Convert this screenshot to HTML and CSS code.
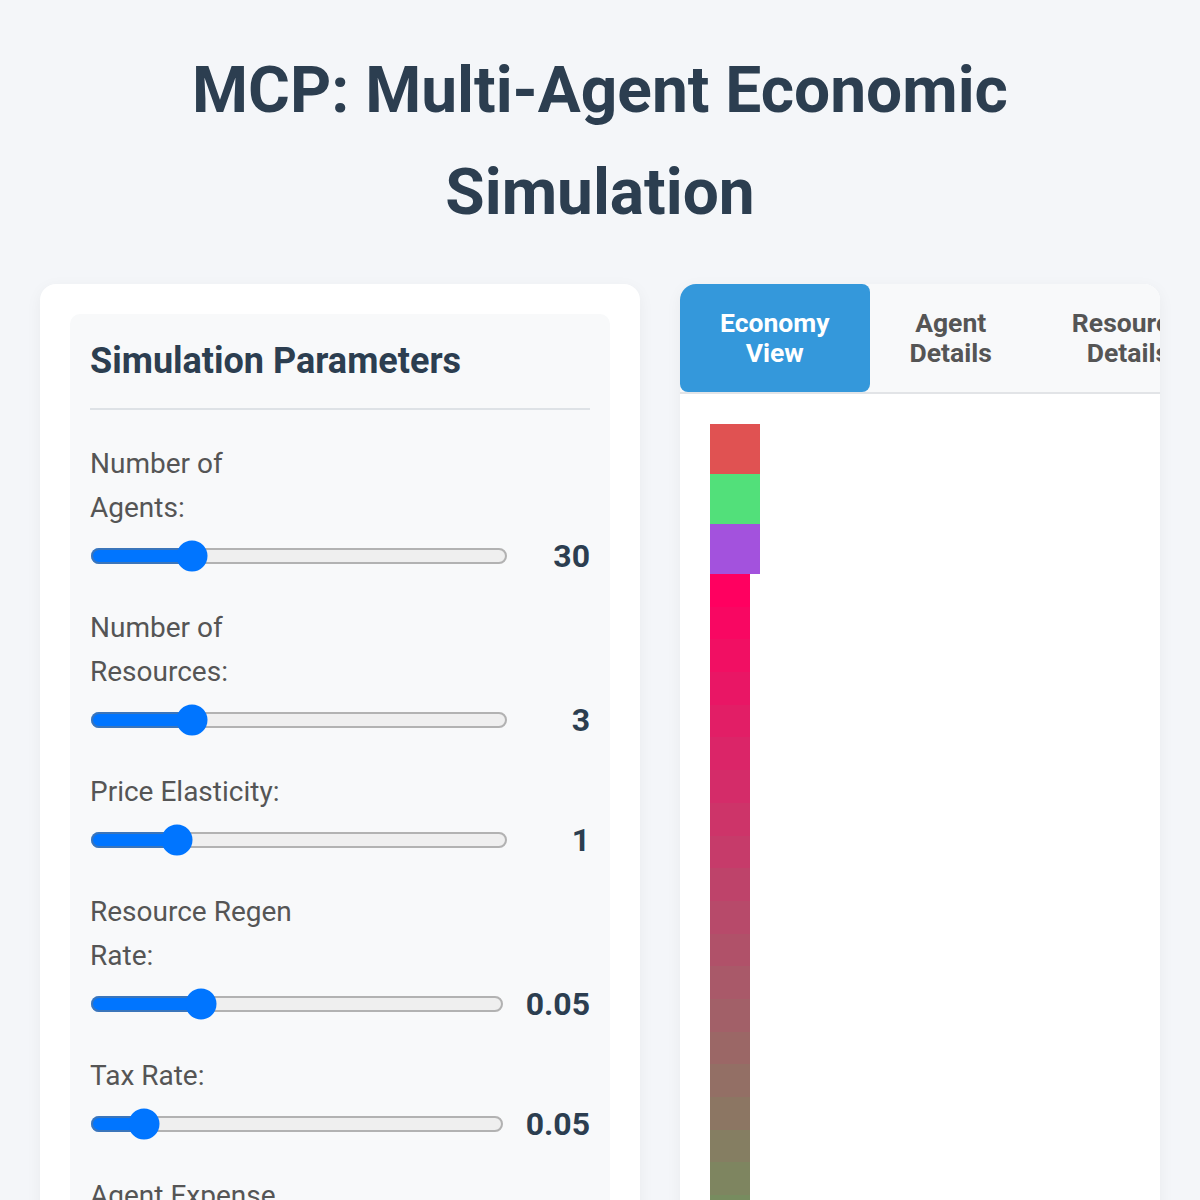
FILE: index.html
```html
<!DOCTYPE html>
<html lang="en">
<head>
    <meta charset="UTF-8">
    <meta name="viewport" content="width=device-width, initial-scale=1.0">
    <title>MCP: Multi-Agent Economic Simulation</title>
    <link rel="stylesheet" href="styles.css">
</head>
<body>
    <div class="container">
        <h1>MCP: Multi-Agent Economic Simulation</h1>

        <div class="layout">
            <div class="sidebar">
                <div class="params">
                    <h2>Simulation Parameters</h2>

                    <div class="param-group">
                        <label for="numAgents">Number of Agents:</label>
                        <div class="param-row">
                            <input type="range" id="numAgents" min="10" max="100" step="1" value="30">
                            <span class="param-value">30</span>
                        </div>
                    </div>
                    <div class="param-group">
                        <label for="numResources">Number of Resources:</label>
                        <div class="param-row">
                            <input type="range" id="numResources" min="1" max="10" step="1" value="3">
                            <span class="param-value">3</span>
                        </div>
                    </div>
                    <div class="param-group">
                        <label for="elasticity">Price Elasticity:</label>
                        <div class="param-row">
                            <input type="range" id="elasticity" min="0.1" max="5" step="0.1" value="1">
                            <span class="param-value">1</span>
                        </div>
                    </div>
                    <div class="param-group">
                        <label for="regenRate">Resource Regen Rate:</label>
                        <div class="param-row">
                            <input type="range" id="regenRate" min="0" max="0.2" step="0.01" value="0.05">
                            <span class="param-value">0.05</span>
                        </div>
                    </div>
                    <div class="param-group">
                        <label for="taxRate">Tax Rate:</label>
                        <div class="param-row">
                            <input type="range" id="taxRate" min="0" max="0.5" step="0.01" value="0.05">
                            <span class="param-value">0.05</span>
                        </div>
                    </div>
                    <div class="param-group">
                        <label for="expense">Agent Expense Rate:</label>
                        <div class="param-row">
                            <input type="range" id="expense" min="0" max="0.1" step="0.01" value="0.02">
                            <span class="param-value">0.02</span>
                        </div>
                    </div>
                </div>
            </div>

            <div class="main-panel">
                <div class="tabs">
                    <button class="tab active">Economy View</button>
                    <button class="tab">Agent Details</button>
                    <button class="tab">Resource Details</button>
                </div>
                <div class="view">
                    <div class="economy-map">
                        <div class="resource red"></div>
                        <div class="resource green"></div>
                        <div class="resource purple"></div>
                        <div class="agent" style="background: rgb(255, 0, 96)"></div>
                        <div class="agent" style="background: rgb(248, 7, 98)"></div>
                        <div class="agent" style="background: rgb(241, 15, 99)"></div>
                        <div class="agent" style="background: rgb(233, 22, 101)"></div>
                        <div class="agent" style="background: rgb(226, 30, 102)"></div>
                        <div class="agent" style="background: rgb(219, 37, 104)"></div>
                        <div class="agent" style="background: rgb(212, 44, 105)"></div>
                        <div class="agent" style="background: rgb(205, 52, 105)"></div>
                        <div class="agent" style="background: rgb(198, 59, 106)"></div>
                        <div class="agent" style="background: rgb(190, 67, 106)"></div>
                        <div class="agent" style="background: rgb(183, 74, 106)"></div>
                        <div class="agent" style="background: rgb(176, 81, 105)"></div>
                        <div class="agent" style="background: rgb(169, 89, 105)"></div>
                        <div class="agent" style="background: rgb(162, 96, 104)"></div>
                        <div class="agent" style="background: rgb(155, 103, 102)"></div>
                        <div class="agent" style="background: rgb(147, 111, 101)"></div>
                        <div class="agent" style="background: rgb(140, 118, 99)"></div>
                        <div class="agent" style="background: rgb(133, 126, 98)"></div>
                        <div class="agent" style="background: rgb(126, 133, 96)"></div>
                        <div class="agent" style="background: rgb(119, 140, 95)"></div>
                    </div>
                </div>
            </div>
        </div>
    </div>
</body>
</html>
```

FILE: styles.css
```css
body {
    font-family: 'Roboto', 'Liberation Sans', sans-serif;
    background-color: #f4f6f9;
    margin: 0;
    color: #333;
}

.container {
    padding: 40px 40px 0;
}

h1 {
    max-width: 1000px;
    margin: 0 auto 40px;
    font-size: 64px;
    line-height: 102px;
    font-weight: 700;
    color: #2c3e50;
    text-align: center;
}

.layout {
    display: flex;
    gap: 40px;
    align-items: flex-start;
}

.sidebar {
    flex: 0 0 600px;
    box-sizing: border-box;
    padding: 30px;
    background-color: #fff;
    border-radius: 16px;
    box-shadow: 0 4px 16px rgba(0, 0, 0, 0.05);
}

.params {
    padding: 20px;
    background-color: #f8f9fa;
    border-radius: 10px;
}

.params h2 {
    margin: 0 0 32px;
    padding-bottom: 20px;
    border-bottom: 2px solid #dee2e6;
    font-size: 36px;
    line-height: 54px;
    font-weight: 700;
    color: #2c3e50;
}

.param-group {
    margin-bottom: 24px;
}

.param-group label {
    display: block;
    max-width: 220px;
    font-size: 28px;
    line-height: 44px;
    color: #555;
}

.param-row {
    display: flex;
    align-items: center;
    gap: 22px;
    height: 52px;
}

.param-row input[type="range"] {
    flex: 1;
    min-width: 0;
    margin: 0;
    zoom: 2;
    accent-color: #0075ff;
}

.param-value {
    min-width: 60px;
    text-align: right;
    font-size: 32px;
    font-weight: 700;
    color: #2c3e50;
}

.main-panel {
    flex: 1;
    min-width: 0;
    background-color: #fff;
    border-radius: 16px;
    overflow: hidden;
    box-shadow: 0 4px 16px rgba(0, 0, 0, 0.05);
}

.tabs {
    display: flex;
    background-color: #f8f9fa;
    border-bottom: 2px solid #e2e4e7;
}

.tab {
    padding: 24px 40px;
    border: none;
    border-radius: 8px;
    background: none;
    font-family: inherit;
    font-size: 26.5px;
    line-height: 30px;
    font-weight: 700;
    color: #555;
    cursor: pointer;
}

.tab.active {
    background-color: #3498db;
    color: #fff;
}

.view {
    padding: 30px;
}

.economy-map {
    display: flex;
    flex-direction: column;
    align-items: flex-start;
}

.resource {
    width: 50px;
    height: 50px;
}

.resource.red {
    background-color: #e05252;
}

.resource.green {
    background-color: #52e07a;
}

.resource.purple {
    background-color: #a352dd;
}

.agent {
    width: 40px;
    height: 32.7px;
}
```
